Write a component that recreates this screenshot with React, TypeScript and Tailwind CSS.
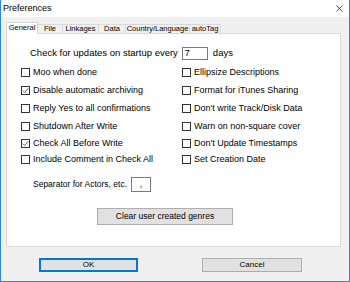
import React from "react";

const font = { fontFamily: '"Liberation Sans", Arial, sans-serif' };

function Box({ checked }: { checked?: boolean }) {
  return (
    <div className="w-[9px] h-[9px] border border-[#333333] bg-white shrink-0 flex items-center justify-center">
      {checked && (
        <svg width="7" height="7" viewBox="0 0 7 7">
          <path d="M0.8 3.6 L2.7 5.5 L6.3 1.2" fill="none" stroke="#555" strokeWidth="0.9" />
        </svg>
      )}
    </div>
  );
}

function Check({ label, checked, h }: { label: string; checked?: boolean; h: string }) {
  return (
    <div className={`flex items-center ${h}`}>
      <Box checked={checked} />
      <span className="ml-[3px] text-[9px] leading-none text-black whitespace-nowrap">{label}</span>
    </div>
  );
}

export default function App() {
  const left: [string, boolean][] = [
    ["Moo when done", false],
    ["Disable automatic archiving", true],
    ["Reply Yes to all confirmations", false],
    ["Shutdown After Write", false],
    ["Check All Before Write", true],
    ["Include Comment in Check All", false],
  ];
  const right: [string, boolean][] = [
    ["Ellipsize Descriptions", false],
    ["Format for iTunes Sharing", false],
    ["Don't write Track/Disk Data", false],
    ["Warn on non-square cover", false],
    ["Don't Update Timestamps", false],
    ["Set Creation Date", false],
  ];
  const heights = ["h-[18px]", "h-[18px]", "h-[18px]", "h-[18px]", "h-[16px]", "h-[16px]"];
  return (
    <div style={font} className="w-[350px] h-[282px] bg-[#f0f0f0] border-l border-r border-b border-[#2b87d8] flex flex-col text-black">
      <div className="h-[17px] bg-white flex items-center justify-between pl-[2px] pr-[6px] shrink-0">
        <span className="text-[9px] leading-none">Preferences</span>
        <svg width="7" height="7" viewBox="0 0 7 7">
          <path d="M0.5 0.5 L6.5 6.5 M6.5 0.5 L0.5 6.5" stroke="#222" strokeWidth="0.8" />
        </svg>
      </div>
      <div className="mt-[5px] ml-[5px] h-[12px] flex items-end relative z-10 shrink-0 text-[7.5px] leading-none">
        <div className="h-[12px] w-[32px] bg-white border border-b-0 border-[#d9d9d9] flex items-center justify-center pb-[1px]">General</div>
        <div className="h-[9px] mb-[1px] w-[25px] border border-l-0 border-b-0 border-[#d9d9d9] flex items-center justify-center">File</div>
        <div className="h-[9px] mb-[1px] w-[36px] border border-l-0 border-b-0 border-[#d9d9d9] flex items-center justify-center">Linkages</div>
        <div className="h-[9px] mb-[1px] w-[27px] border border-l-0 border-b-0 border-[#d9d9d9] flex items-center justify-center">Data</div>
        <div className="h-[9px] mb-[1px] w-[64px] border border-l-0 border-b-0 border-[#d9d9d9] flex items-center justify-center">Country/Language</div>
        <div className="h-[9px] mb-[1px] w-[31px] border border-l-0 border-b-0 border-[#d9d9d9] flex items-center justify-center">autoTag</div>
      </div>
      <div className="mt-[-1px] ml-[5px] w-[335px] h-[214px] bg-white border border-[#d9d9d9] shrink-0 flex flex-col">
        <div className="mt-[12px] h-[14px] flex items-center">
          <span className="ml-[23px] text-[9.5px] leading-none">Check for updates on startup every</span>
          <div className="ml-[4px] w-[26px] h-[13px] border border-[#7a7a7a] bg-white text-[9px] leading-none pl-[2px] flex items-center">7</div>
          <span className="ml-[5px] text-[9.5px] leading-none">days</span>
        </div>
        <div className="mt-[3px] flex">
          <div className="ml-[14px] w-[161px] flex flex-col">
            {left.map(([l, c], i) => (
              <Check key={l} label={l} checked={c} h={heights[i]} />
            ))}
          </div>
          <div className="flex flex-col">
            {right.map(([l, c], i) => (
              <Check key={l} label={l} checked={c} h={heights[i]} />
            ))}
          </div>
        </div>
        <div className="mt-[10px] h-[15px] flex items-center">
          <span className="ml-[26px] text-[8.5px] leading-none">Separator for Actors, etc.</span>
          <div className="ml-[4px] w-[20px] h-[15px] border border-[#7a7a7a] bg-white text-[9px] leading-none flex items-center justify-center">,</div>
        </div>
        <div className="mt-[16px] ml-[90px] w-[136px] h-[17px] bg-[#e1e1e1] border border-[#adadad] flex items-center justify-center text-[8.5px] leading-none">
          Clear user created genres
        </div>
      </div>
      <div className="mt-[11px] flex shrink-0">
        <div className="ml-[38px] w-[99px] h-[14px] bg-[#e1e1e1] border-2 border-[#0078d7] flex items-center justify-center text-[8px] leading-none">OK</div>
        <div className="ml-[64px] w-[100px] h-[14px] bg-[#e1e1e1] border border-[#adadad] flex items-center justify-center text-[8px] leading-none">Cancel</div>
      </div>
    </div>
  );
}
